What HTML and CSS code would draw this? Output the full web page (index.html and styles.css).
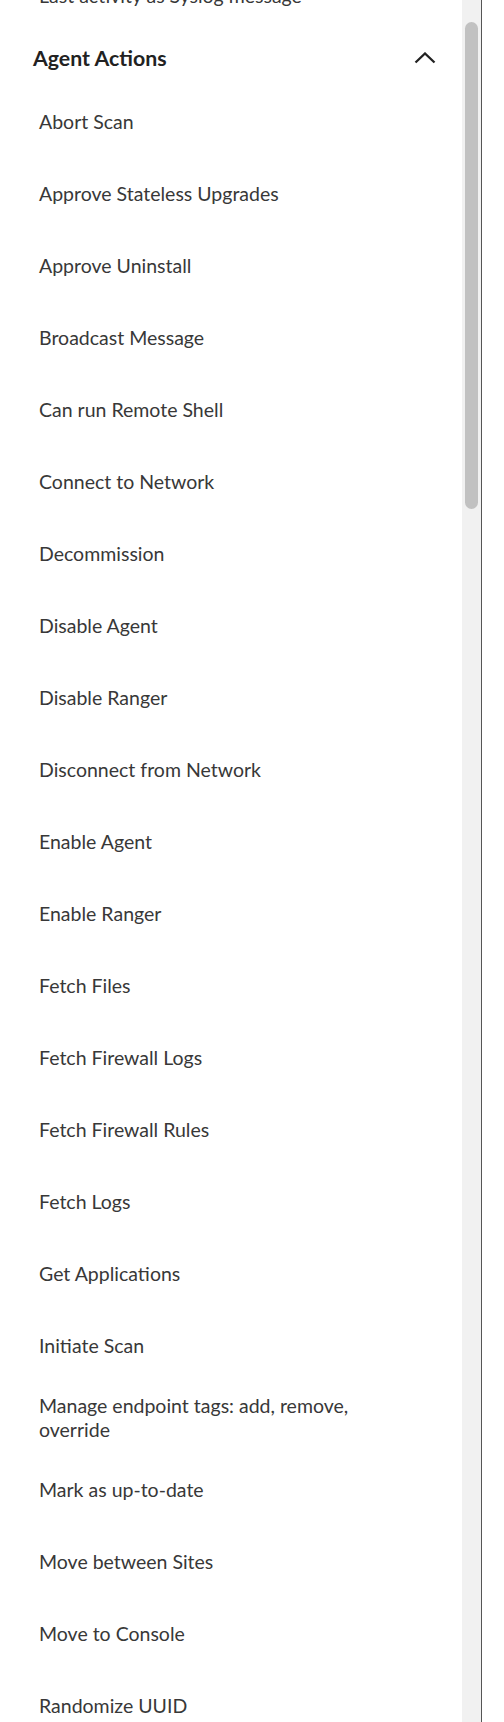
FILE: index.html
```html
<!doctype html>
<html>
<head>
  <link rel="stylesheet" href="styles.css">
</head>
<body>
  <div class="drawer">
    <div class="drawer-body">
      <div class="list">
        <div class="item">Last activity as Syslog message</div>
        <div class="section-head">
          <span>Agent Actions</span>
          <!-- collapse chevron -->
          <svg class="chevron" width="22" height="12" viewBox="0 0 22 12">
            <polyline points="1.5,10.5 11,1.5 20.5,10.5" fill="none" stroke="#222" stroke-width="2.3"/>
          </svg>
        </div>
        <div class="item">Abort Scan</div>
        <div class="item">Approve Stateless Upgrades</div>
        <div class="item">Approve Uninstall</div>
        <div class="item">Broadcast Message</div>
        <div class="item">Can run Remote Shell</div>
        <div class="item">Connect to Network</div>
        <div class="item">Decommission</div>
        <div class="item">Disable Agent</div>
        <div class="item">Disable Ranger</div>
        <div class="item">Disconnect from Network</div>
        <div class="item">Enable Agent</div>
        <div class="item">Enable Ranger</div>
        <div class="item">Fetch Files</div>
        <div class="item">Fetch Firewall Logs</div>
        <div class="item">Fetch Firewall Rules</div>
        <div class="item">Fetch Logs</div>
        <div class="item">Get Applications</div>
        <div class="item">Initiate Scan</div>
        <div class="item"><span class="wrap">Manage endpoint tags: add, remove, override</span></div>
        <div class="item">Mark as up-to-date</div>
        <div class="item">Move between Sites</div>
        <div class="item">Move to Console</div>
        <div class="item">Randomize UUID</div>
      </div>
    </div>
    <div class="scroll-track">
      <div class="scroll-thumb"></div>
    </div>
  </div>
</body>
</html>
```

FILE: styles.css
```css
html, body {
  margin: 0;
  padding: 0;
  height: 100%;
  overflow: hidden;
  background: #fff;
  font-family: Lato, "Liberation Sans", sans-serif;
}
.drawer {
  display: flex;
  width: 481px;
  height: 1722px;
  border-right: 1px solid #555;
}
.drawer-body {
  flex: 1;
  overflow: hidden;
}
.list {
  margin-top: -40px;
}
.item {
  display: flex;
  align-items: center;
  height: 72px;
  padding: 0 24px 0 39px;
  font-size: 19.5px;
  line-height: 24px;
  color: #383838;
}
.wrap {
  max-width: 360px;
}
.section-head {
  display: flex;
  align-items: center;
  justify-content: space-between;
  height: 54px;
  box-sizing: border-box;
  padding: 0 26px 3px 33px;
  font-size: 21.3px;
  font-weight: bold;
  color: #222;
}
.chevron {
  display: block;
}
.scroll-track {
  width: 19px;
  background: #f1f1f1;
  padding: 22px 3px 0 3px;
  box-sizing: border-box;
}
.scroll-thumb {
  height: 487px;
  border-radius: 7px;
  background: #c1c1c1;
}
```
